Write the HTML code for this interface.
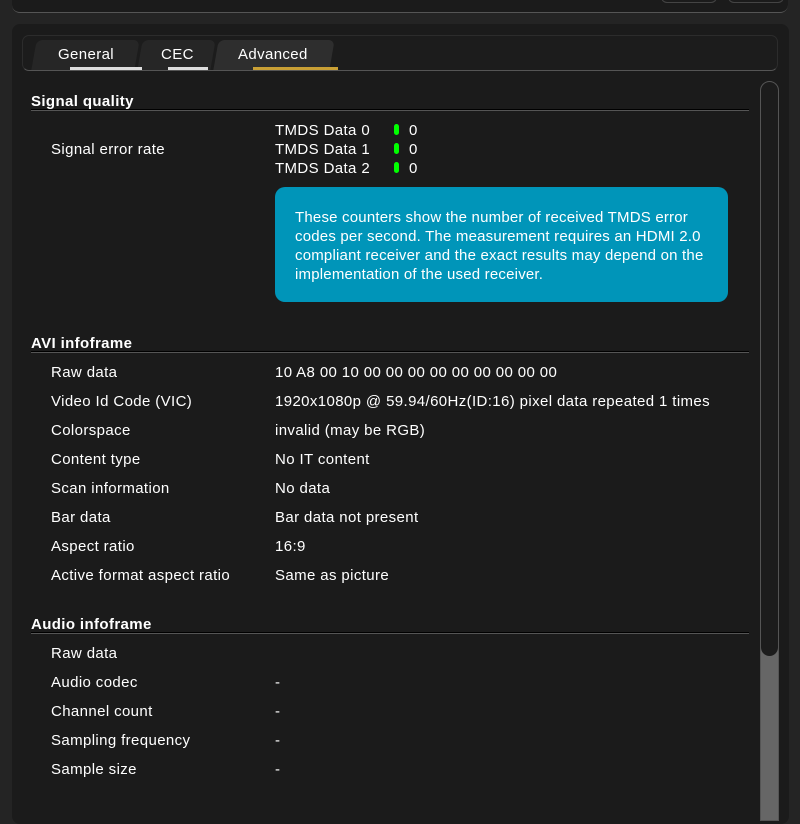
<!DOCTYPE html>
<html><head><style>
*{margin:0;padding:0;box-sizing:border-box}
body{width:800px;height:811px;background:#242424;font-family:"Liberation Sans",sans-serif;color:#fff;font-size:15px;letter-spacing:0.38px;position:relative;overflow:hidden}
.top{position:absolute;left:12px;top:-10px;width:776px;height:23px;background:#1b1b1b;border-bottom:1px solid #555;border-radius:0 0 8px 8px}
.btn{position:absolute;top:-6px;height:9px;width:56px;border:1px solid #444;border-top:none;border-radius:0 0 6px 6px}
.outer{position:absolute;left:12px;top:24px;width:777px;height:800px;background:#1b1b1b;border-radius:8px}
.tabbar{position:absolute;left:22px;top:35px;width:756px;height:36px;background:#1c1c1c;border:1px solid #2c2c2c;border-bottom:1px solid #555;border-radius:7px}
.tab{position:absolute;top:40px;height:30px;background:#262626;border-radius:6px 6px 0 0;transform:skewX(-10deg);}
.tl{position:absolute;top:46px;font-size:15px;color:#fff}
.ul{position:absolute;top:67px;height:3px}
.h{position:absolute;left:31px;font-weight:bold;font-size:15px}
.hl{position:absolute;left:31px;width:718px;height:2px;border-top:1px solid #000;border-bottom:1px solid #555}
.l{position:absolute;left:51px}
.v{position:absolute;left:275px}
.led{position:absolute;left:394px;width:5px;height:11px;border-radius:3px;background:#00ff00}
.info{position:absolute;left:275px;top:187px;width:453px;height:115px;background:#0095b9;border-radius:10px;padding:21px 20px;line-height:19px;font-size:15px;letter-spacing:0.2px}
.track{position:absolute;left:760px;top:81px;width:19px;height:740px;background:#666;border-radius:10px 10px 0 0;border:1px solid #555}
.thumb{position:absolute;left:761px;top:82px;width:17px;height:574px;background:#1c1c1c;border-radius:9px}
</style></head><body>
<div class="top"></div>
<div class="btn" style="left:661px"></div><div class="btn" style="left:728px"></div>
<div class="outer"></div>
<div class="tabbar"></div>
<div class="tab" style="left:34px;width:103px"></div>
<div class="tab" style="left:140px;width:73px"></div>
<div class="tab" style="left:216px;width:116px;background:#2e2e2e"></div>
<div class="tl" style="left:58px">General</div>
<div class="tl" style="left:161px">CEC</div>
<div class="tl" style="left:238px">Advanced</div>
<div class="ul" style="left:70px;width:72px;background:#ddd"></div>
<div class="ul" style="left:168px;width:40px;background:#ddd"></div>
<div class="ul" style="left:253px;width:85px;background:#c9a035"></div>

<div class="h" style="top:93px">Signal quality</div><div class="hl" style="top:109px"></div>
<div class="l" style="top:141px">Signal error rate</div>
<div class="v" style="top:122px">TMDS Data 0</div><div class="led" style="top:124px"></div><div class="v" style="left:409px;top:122px">0</div>
<div class="v" style="top:141px">TMDS Data 1</div><div class="led" style="top:143px"></div><div class="v" style="left:409px;top:141px">0</div>
<div class="v" style="top:160px">TMDS Data 2</div><div class="led" style="top:162px"></div><div class="v" style="left:409px;top:160px">0</div>
<div class="info">These counters show the number of received TMDS error codes per second. The measurement requires an HDMI 2.0 compliant receiver and the exact results may depend on the implementation of the used receiver.</div>

<div class="h" style="top:335px">AVI infoframe</div><div class="hl" style="top:351px"></div>
<div class="l" style="top:364px">Raw data</div><div class="v" style="top:364px">10 A8 00 10 00 00 00 00 00 00 00 00 00</div>
<div class="l" style="top:393px">Video Id Code (VIC)</div><div class="v" style="top:393px">1920x1080p @ 59.94/60Hz(ID:16) pixel data repeated 1 times</div>
<div class="l" style="top:422px">Colorspace</div><div class="v" style="top:422px">invalid (may be RGB)</div>
<div class="l" style="top:451px">Content type</div><div class="v" style="top:451px">No IT content</div>
<div class="l" style="top:480px">Scan information</div><div class="v" style="top:480px">No data</div>
<div class="l" style="top:509px">Bar data</div><div class="v" style="top:509px">Bar data not present</div>
<div class="l" style="top:538px">Aspect ratio</div><div class="v" style="top:538px">16:9</div>
<div class="l" style="top:567px">Active format aspect ratio</div><div class="v" style="top:567px">Same as picture</div>

<div class="h" style="top:616px">Audio infoframe</div><div class="hl" style="top:632px"></div>
<div class="l" style="top:645px">Raw data</div>
<div class="l" style="top:674px">Audio codec</div><div class="v" style="top:674px">-</div>
<div class="l" style="top:703px">Channel count</div><div class="v" style="top:703px">-</div>
<div class="l" style="top:732px">Sampling frequency</div><div class="v" style="top:732px">-</div>
<div class="l" style="top:761px">Sample size</div><div class="v" style="top:761px">-</div>

<div class="track"></div><div class="thumb"></div>
</body></html>
